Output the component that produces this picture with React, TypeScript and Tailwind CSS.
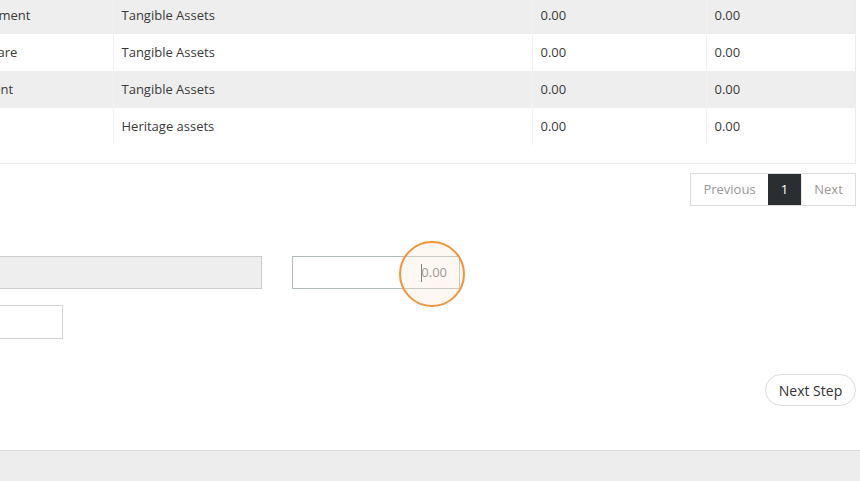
import React from "react";

type Row = {
  name: string;
  category: string;
  opening: string;
  closing: string;
};

const rows: Row[] = [
  { name: "Fixtures and Equipment", category: "Tangible Assets", opening: "0.00", closing: "0.00" },
  { name: "Computer & Software", category: "Tangible Assets", opening: "0.00", closing: "0.00" },
  { name: "Plant and Equipment", category: "Tangible Assets", opening: "0.00", closing: "0.00" },
  { name: "Land", category: "Heritage assets", opening: "0.00", closing: "0.00" },
];

function AssetTable() {
  return (
    <div className="border-r border-b border-[#ececec] pb-[18px]">
      <table className="w-full border-collapse text-[13px] text-[#3a3a3a]">
        <tbody>
          {rows.map((r, i) => (
            <tr key={i} className={i % 2 === 0 ? "h-[37px] bg-[#eeeeee]" : "h-[37px] bg-white"}>
              <td className="w-[235px] border-r border-[#f2f2f2] px-2 align-middle">{r.name}</td>
              <td className="w-[419px] border-r border-[#f2f2f2] px-2 align-middle">{r.category}</td>
              <td className="w-[174px] border-r border-[#f2f2f2] px-2 align-middle">{r.opening}</td>
              <td className="px-2 align-middle">{r.closing}</td>
            </tr>
          ))}
        </tbody>
      </table>
    </div>
  );
}

function Pagination() {
  return (
    <div className="mt-[9px] flex justify-end">
      <div className="flex h-[33px] border border-[#dddddd] text-[13px]">
        <span className="flex w-[77px] items-center justify-center text-[#999]">Previous</span>
        <span className="flex w-[33px] items-center justify-center bg-[#2a2e31] text-white">1</span>
        <span className="flex w-[54px] items-center justify-center border-l border-[#e6e6e6] text-[#999]">Next</span>
      </div>
    </div>
  );
}

function AmountField() {
  return (
    <div className="relative h-[33px] w-[168px] border border-[#b3bebc] bg-white">
      <div className="flex h-full items-center justify-end pr-3 text-[13px] text-[#777]">
        <span className="mr-[-1px] h-[18px] w-px bg-[#555]" />
        <span>0.00</span>
      </div>
      {/* click highlight ring */}
      <div className="absolute left-[106px] top-[-16px] h-[66px] w-[66px] rounded-full border-[2.5px] border-[#ef9540] bg-[#fbe9d6]/30" />
    </div>
  );
}

export default function App() {
  return (
    <div
      className="relative h-[481px] w-[860px] overflow-hidden bg-white"
      style={{ fontFamily: '"Open Sans", "Noto Sans", sans-serif' }}
    >
      <div className="ml-[-122px] mt-[-3px] w-[978px]">
        <AssetTable />
        <Pagination />

        <div className="mt-[50px] flex items-center gap-[30px]">
          <div className="h-[33px] w-[384px] border border-[#cccccc] bg-[#eeeeee]" />
          <AmountField />
        </div>

        <div className="mt-[16px] h-[34px] w-[185px] border border-[#d4d4d4] bg-white" />

        <div className="mt-[35px] flex justify-end">
          <button className="h-[32px] w-[91px] rounded-full border border-[#dddddd] bg-white text-[14px] text-[#333]">
            Next Step
          </button>
        </div>
      </div>

      <div className="absolute bottom-0 left-0 right-0 h-[31px] border-t border-[#dcdcdc] bg-[#eeeded]" />
    </div>
  );
}
